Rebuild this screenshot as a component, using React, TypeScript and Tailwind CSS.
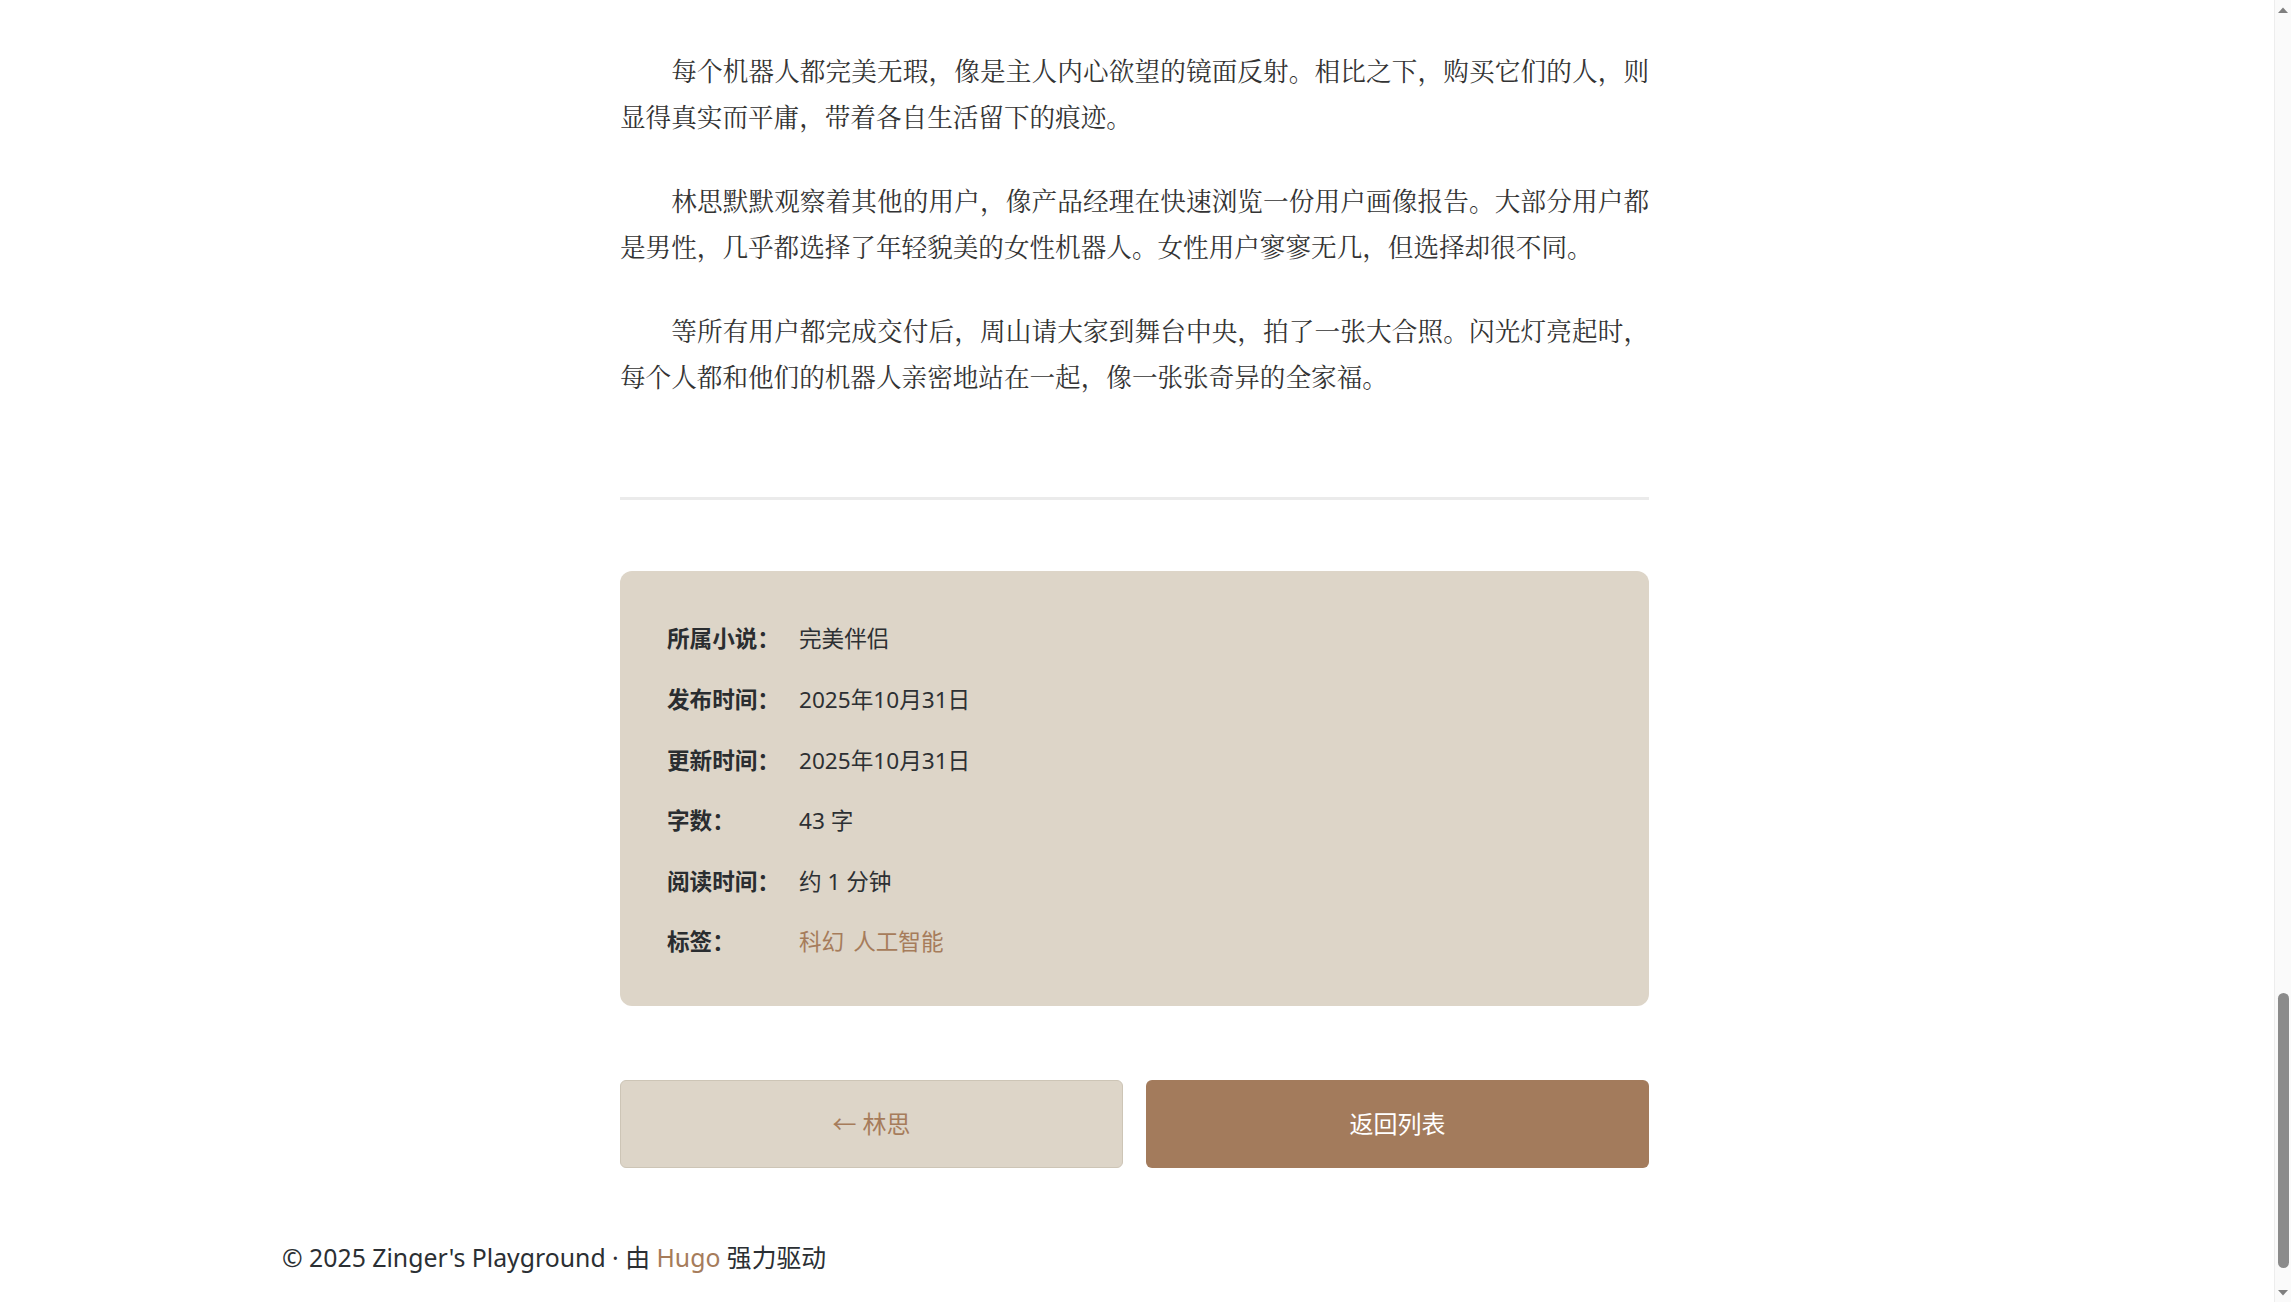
const paragraphs = [
  '每个机器人都完美无瑕，像是主人内心欲望的镜面反射。相比之下，购买它们的人，则显得真实而平庸，带着各自生活留下的痕迹。',
  '林思默默观察着其他的用户，像产品经理在快速浏览一份用户画像报告。大部分用户都是男性，几乎都选择了年轻貌美的女性机器人。女性用户寥寥无几，但选择却很不同。',
  '等所有用户都完成交付后，周山请大家到舞台中央，拍了一张大合照。闪光灯亮起时，每个人都和他们的机器人亲密地站在一起，像一张张奇异的全家福。',
]

const meta: { label: string; value: string; tags?: string[] }[] = [
  { label: '所属小说：', value: '完美伴侣' },
  { label: '发布时间：', value: '2025年10月31日' },
  { label: '更新时间：', value: '2025年10月31日' },
  { label: '字数：', value: '43 字' },
  { label: '阅读时间：', value: '约 1 分钟' },
  { label: '标签：', value: '', tags: ['科幻', '人工智能'] },
]

const sans = "font-['Noto_Sans','Noto_Sans_CJK_SC',sans-serif]"

const Scrollbar = () => (
  <div className="w-[17px] h-screen bg-[#fafafa] border-l border-[#ededed] flex flex-col shrink-0">
    <div className="h-[17px] flex items-center justify-center pt-[2px]">
      <svg width="10" height="6" viewBox="0 0 10 6">
        <path d="M0 6 L5 0.5 L10 6 Z" fill="#7f7f7f" />
      </svg>
    </div>
    <div className="flex-1 flex flex-col justify-end items-center">
      <div className="w-[11px] h-[275px] mb-[17px] rounded-full bg-[#8b8b8b]" />
    </div>
    <div className="h-[17px] flex items-center justify-center pb-[2px]">
      <svg width="10" height="6" viewBox="0 0 10 6">
        <path d="M0 0 L5 5.5 L10 0 Z" fill="#7f7f7f" />
      </svg>
    </div>
  </div>
)

export default function App() {
  return (
    <div className="flex h-screen overflow-hidden bg-white">
      <div className="flex-1 flex flex-col pr-[5px]">
        <main className="w-[1029px] mx-auto pt-[50px]">
          <article className="font-['Liberation_Serif','Noto_Serif_CJK_SC','Noto_Sans_CJK_SC',serif] text-[25.6px] leading-[46px] text-[#333]">
            {paragraphs.map((p, i) => (
              <p key={i} className="indent-[2em] text-justify mb-[38px] last:mb-0">
                {p}
              </p>
            ))}
          </article>

          <hr className="mt-[95px] border-0 h-[3px] bg-[#ebebeb]" />

          {/* meta box */}
          <section className={`mt-[71px] bg-[#ddd5c8] rounded-[12px] px-[47px] pt-[38px] pb-[33px] ${sans} text-[22.6px] text-[#2d3033]`}>
            {meta.map((m) => (
              <div key={m.label} className="flex items-center h-[60.6px]">
                <span className="w-[132px] font-bold text-[#2a2d30]">{m.label}</span>
                {m.tags ? (
                  <span className="flex gap-[9px] text-[#a67c5b]">
                    {m.tags.map((t) => (
                      <a key={t} href="#">{t}</a>
                    ))}
                  </span>
                ) : (
                  <span>{m.value}</span>
                )}
              </div>
            ))}
          </section>

          {/* nav buttons */}
          <nav className={`mt-[74px] grid grid-cols-2 gap-[23px] ${sans} text-[24px]`}>
            <a
              href="#"
              className="h-[88px] flex items-center justify-center rounded-[6px] bg-[#ddd5c8] border border-[#cdc5b6] text-[#a67c5b]"
            >
              ← 林思
            </a>
            <a
              href="#"
              className="h-[88px] flex items-center justify-center rounded-[6px] bg-[#a37b5c] text-white"
            >
              返回列表
            </a>
          </nav>
        </main>

        <footer className={`w-[1705px] mx-auto mt-[71px] ${sans} text-[24.8px] leading-[36px] text-[#2b2f33]`}>
          © 2025 Zinger's Playground · 由 <a href="#" className="text-[#a67c5b]">Hugo</a> 强力驱动
        </footer>
      </div>
      <Scrollbar />
    </div>
  )
}
